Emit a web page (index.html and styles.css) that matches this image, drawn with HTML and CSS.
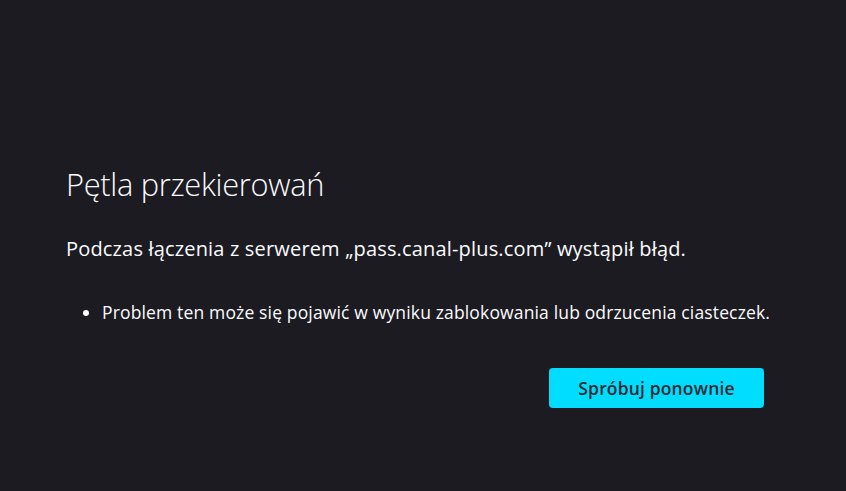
FILE: index.html
```html
<!DOCTYPE html>
<html lang="pl">
<head>
<meta charset="utf-8">
<link rel="stylesheet" href="styles.css">
<title>Pętla przekierowań</title>
</head>
<body>
<main class="container">
  <h1 class="title">Pętla przekierowań</h1>
  <p class="short-desc">Podczas łączenia z serwerem „pass.canal-plus.com” wystąpił błąd.</p>
  <ul class="long-desc">
    <li>Problem ten może się pojawić w wyniku zablokowania lub odrzucenia ciasteczek.</li>
  </ul>
  <div class="actions">
    <button class="primary">Spróbuj ponownie</button>
  </div>
</main>
</body>
</html>
```

FILE: styles.css
```css
html, body {
  margin: 0;
  padding: 0;
  background: #1c1b22;
  color: #fbfbfe;
  font-family: "Open Sans", "Noto Sans", sans-serif;
}
body {
  height: 491px;
}
.container {
  width: 698px;
  margin: 0 0 0 66px;
  padding-top: 160px;
}
.title {
  margin: 0;
  font-size: 30.8px;
  font-weight: 300;
  line-height: 48px;
  letter-spacing: -0.3px;
}
.short-desc {
  margin: 27px 0 0;
  font-size: 20px;
  line-height: 28px;
  letter-spacing: 0.17px;
}
.long-desc {
  margin: 37px 0 0;
  padding-left: 36px;
  font-size: 17.5px;
  line-height: 24px;
  letter-spacing: 0.15px;
  white-space: nowrap;
}
.actions {
  display: flex;
  justify-content: flex-end;
  margin-top: 44px;
}
.primary {
  width: 215px;
  height: 40px;
  border: none;
  border-radius: 4px;
  background: #00ddff;
  color: #2b2a33;
  font-family: "Open Sans", "Noto Sans", sans-serif;
  font-size: 17.5px;
  font-weight: 600;
  letter-spacing: 0.15px;
}
```
